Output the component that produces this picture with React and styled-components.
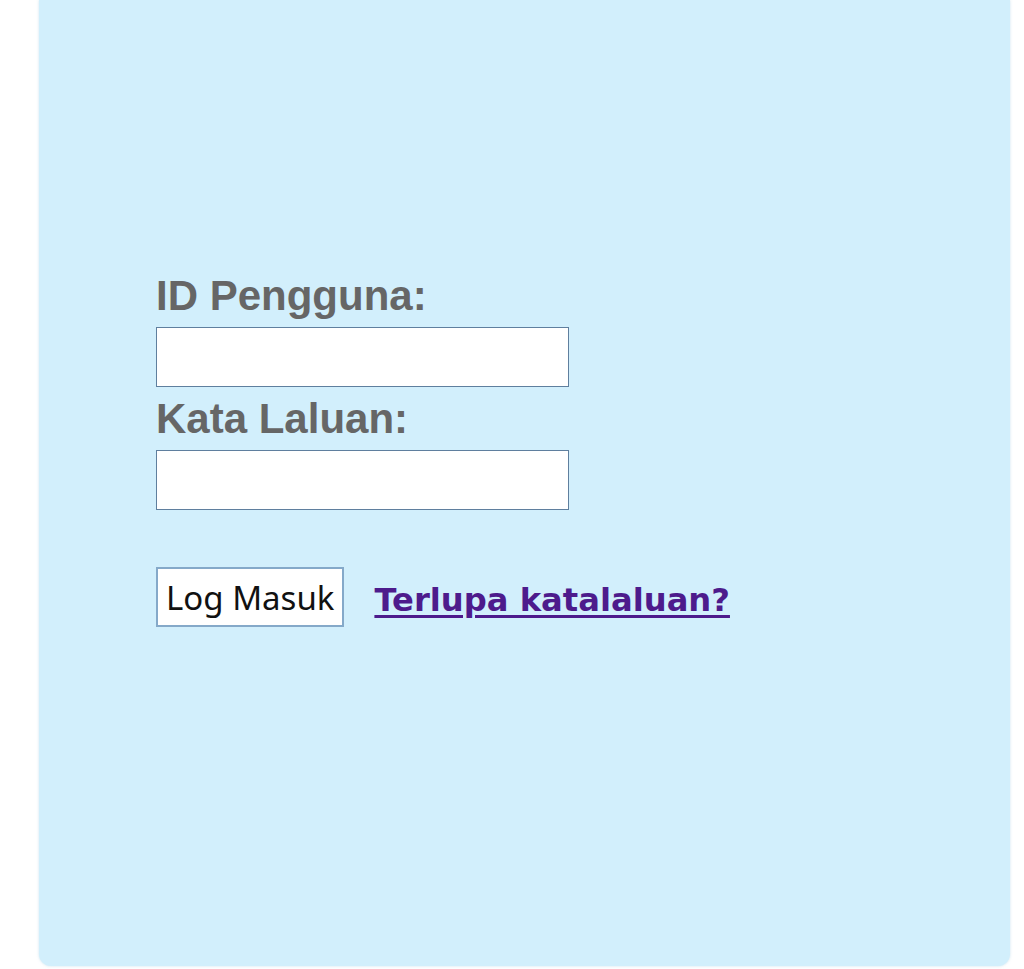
import React from "react";
import styled, { createGlobalStyle } from "styled-components";

const GlobalStyle = createGlobalStyle`
  html, body {
    margin: 0;
    padding: 0;
    background: #ffffff;
  }
`;

const Page = styled.div`
  width: 1024px;
  height: 969px;
  overflow: hidden;
`;

const Panel = styled.div`
  margin-left: 39px;
  width: 971px;
  height: 966px;
  box-sizing: border-box;
  padding: 270px 0 0 117px;
  background: #d2effc;
  border-radius: 0 0 12px 12px;
  box-shadow: 0 0 3px rgba(170, 210, 230, 0.6);
`;

const Form = styled.form`
  display: flex;
  flex-direction: column;
  align-items: flex-start;
`;

const Label = styled.label`
  display: block;
  padding-top: 2px;
  font-family: "Liberation Sans", Arial, sans-serif;
  font-weight: bold;
  font-size: 42px;
  line-height: 48px;
  color: #666666;
  margin-bottom: 7px;
`;

const Input = styled.input`
  box-sizing: border-box;
  width: 413px;
  height: 60px;
  margin: 0 0 ${(p) => p.$after}px;
  padding: 0 8px;
  border: 1.5px solid #5f7f9e;
  background: #ffffff;
  font-size: 28px;
  outline: none;
`;

const Actions = styled.div`
  display: flex;
  align-items: center;
  gap: 30px;
`;

const Button = styled.button`
  box-sizing: border-box;
  height: 60px;
  padding: 0 8px;
  border: 2px solid #85a9c9;
  background: #ffffff;
  font-family: "Noto Sans", Tahoma, sans-serif;
  font-size: 33px;
  color: #111111;
  cursor: pointer;
`;

const ForgotLink = styled.a`
  padding-top: 6px;
  font-family: "DejaVu Sans", Verdana, sans-serif;
  font-weight: bold;
  font-size: 32.2px;
  color: #4d1b8c;
  text-decoration: underline;
  text-decoration-thickness: 3px;
  text-underline-offset: 4px;
`;

const App = () => {
  return (
    <>
      <GlobalStyle />
      <Page>
        <Panel>
          <Form onSubmit={(e) => e.preventDefault()}>
            <Label htmlFor="user">ID Pengguna:</Label>
            <Input id="user" type="text" $after={6} />
            <Label htmlFor="pass">Kata Laluan:</Label>
            <Input id="pass" type="password" $after={57} />
            <Actions>
              <Button type="submit">Log Masuk</Button>
              <ForgotLink href="#">Terlupa katalaluan?</ForgotLink>
            </Actions>
          </Form>
        </Panel>
      </Page>
    </>
  );
};

export default App;
